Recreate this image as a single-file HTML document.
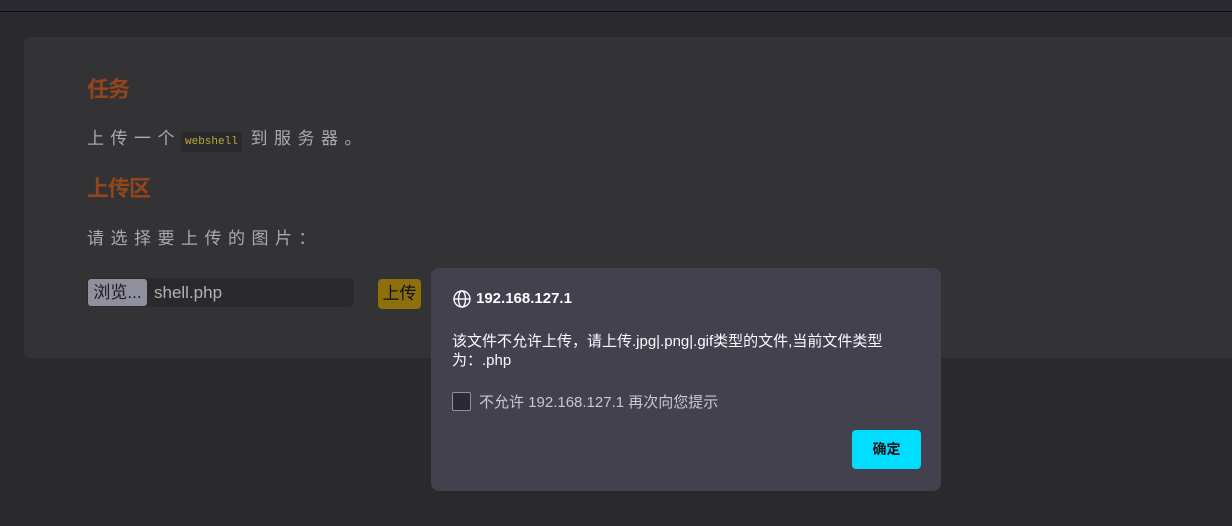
<!DOCTYPE html>
<html><head><meta charset="utf-8"><style>
body{margin:0;width:1232px;height:526px;background:#2a2a2e;position:relative;overflow:hidden;font-family:"Liberation Sans","Noto Sans CJK SC",sans-serif}
.top{position:absolute;left:0;top:0;width:1232px;height:11px;background:#2b2a33;border-bottom:1px solid #0c0c0d}
.card{position:absolute;left:24px;top:37px;width:1220px;height:321px;background:#333336;border-radius:5px}
.h{position:absolute;left:87px;color:#94461a;font-size:22px;font-weight:bold;letter-spacing:-1px}
.p{position:absolute;left:87px;color:#a9a9b0;font-size:17px;letter-spacing:6.5px}
code{background:#2a2a2d;color:#b8a937;font-family:"Liberation Mono",monospace;font-size:11px;padding:4px 4px;border-radius:4px;letter-spacing:0}
.dlg{position:absolute;left:431px;top:268px;width:510px;height:223px;background:#42414d;border-radius:8px;color:#fbfbfe}
</style></head><body>
<div class="top"></div>
<div class="card"></div>
<div class="h" style="top:72px">任务</div>
<div class="p" style="top:124px">上传一个<code>webshell</code><span style="letter-spacing:4px"> </span>到服务器。</div>
<div class="h" style="top:171px">上传区</div>
<div class="p" style="top:224px">请选择要上传的图片：</div>
<div style="position:absolute;left:87px;top:278px;width:267px;height:29px;background:#2a2a2d;border-radius:5px"></div>
<div style="position:absolute;left:88px;top:279px;width:59px;height:27px;background:#8f8f9d;border-radius:3px;color:#1b1b1f;font-size:17px;line-height:27px;text-align:center">浏览...</div>
<div style="position:absolute;left:154px;top:279px;color:#b0b0b8;font-size:17px;line-height:27px">shell.php</div>
<div style="position:absolute;left:378px;top:279px;width:43px;height:30px;background:#8d700c;border-radius:4px;color:#111;font-size:17px;line-height:30px;text-align:center">上传</div>
<div class="dlg">
<svg style="position:absolute;left:22px;top:22px" width="18" height="18" viewBox="0 0 18 18" fill="none" stroke="#fbfbfe" stroke-width="1.4"><circle cx="9" cy="9" r="8"/><ellipse cx="9" cy="9" rx="3.5" ry="8"/><line x1="1" y1="9" x2="17" y2="9"/></svg>
<div style="position:absolute;left:45px;top:22px;font-size:15px;font-weight:bold">192.168.127.1</div>
<div style="position:absolute;left:21px;top:64px;font-size:15px;line-height:19px;width:470px">该文件不允许上传，请上传.jpg|.png|.gif类型的文件,当前文件类型<br>为：.php</div>
<div style="position:absolute;left:21px;top:124px;width:17px;height:17px;border:1px solid #8f8f9d;background:#2b2a33;border-radius:2px"></div>
<div style="position:absolute;left:48px;top:123px;font-size:15px;color:#c8c8d0">不允许 192.168.127.1 再次向您提示</div>
<div style="position:absolute;left:421px;top:162px;width:69px;height:39px;background:#00ddff;border-radius:4px;color:#15141a;font-weight:bold;font-size:14px;line-height:39px;text-align:center">确定</div>
</div>
</body></html>
